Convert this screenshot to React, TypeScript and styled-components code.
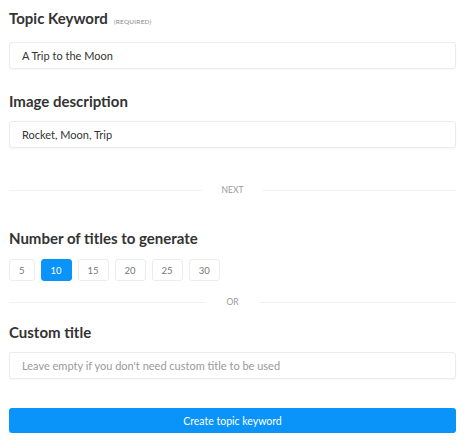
import { useState } from "react";
import styled, { createGlobalStyle } from "styled-components";

const GlobalStyle = createGlobalStyle`
  body {
    margin: 0;
    background: #ffffff;
    font-family: Lato, "Open Sans", sans-serif;
  }
`;

const Form = styled.div`
  display: flex;
  flex-direction: column;
  padding: 8px 10px 0 9px;
`;

const Label = styled.div<{ $top?: number }>`
  display: flex;
  align-items: baseline;
  gap: 6px;
  margin-top: ${(p) => p.$top ?? 0}px;
  font-size: 15px;
  line-height: 20px;
  font-weight: 700;
  color: #333333;
`;

const Required = styled.span`
  font-size: 6.5px;
  font-weight: 400;
  color: #8a8a8a;
  letter-spacing: 0.2px;
`;

const Input = styled.input`
  box-sizing: border-box;
  width: 100%;
  height: 27px;
  margin-top: 10px;
  padding: 0 12px;
  border: 1px solid #ececec;
  border-radius: 3px;
  box-shadow: 0 1px 2px rgba(0, 0, 0, 0.04);
  font-family: Lato, sans-serif;
  font-size: 11px;
  color: #333333;
  outline: none;

  &::placeholder {
    color: #9a9a9a;
  }
`;

const Divider = styled.div<{ $top: number }>`
  display: flex;
  align-items: center;
  gap: 20px;
  margin-top: ${(p) => p.$top}px;
  height: 12px;
  font-size: 8.5px;
  color: #999999;

  &::before,
  &::after {
    content: "";
    flex: 1;
    height: 1px;
    background: #f0f0f0;
  }
`;

const Counts = styled.div`
  display: flex;
  gap: 6px;
  margin-top: 11px;
`;

const CountButton = styled.button<{ $active: boolean }>`
  box-sizing: border-box;
  height: 22px;
  min-width: 25px;
  padding: 0 9px;
  border: 1px solid ${(p) => (p.$active ? "#0a93f8" : "#ececec")};
  border-radius: 3px;
  background: ${(p) => (p.$active ? "#0a93f8" : "#ffffff")};
  color: ${(p) => (p.$active ? "#ffffff" : "#777777")};
  font-family: Lato, sans-serif;
  font-size: 9.5px;
  cursor: pointer;
`;

const Submit = styled.button`
  box-sizing: border-box;
  width: 100%;
  height: 25px;
  margin-top: 29px;
  border: none;
  border-radius: 3px;
  background: #0a93f8;
  color: #ffffff;
  font-family: Lato, sans-serif;
  font-size: 10.5px;
  cursor: pointer;
`;

const counts = [5, 10, 15, 20, 25, 30];

export default function App() {
  const [count, setCount] = useState(10);

  return (
    <>
      <GlobalStyle />
      <Form>
        <Label>
          Topic Keyword <Required>(REQUIRED)</Required>
        </Label>
        <Input defaultValue="A Trip to the Moon" />

        <Label $top={22}>Image description</Label>
        <Input defaultValue="Rocket, Moon, Trip" />

        <Divider $top={36}>NEXT</Divider>

        <Label $top={32}>Number of titles to generate</Label>
        <Counts>
          {counts.map((n) => (
            <CountButton key={n} $active={n === count} onClick={() => setCount(n)}>
              {n}
            </CountButton>
          ))}
        </Counts>

        <Divider $top={15}>OR</Divider>

        <Label $top={14}>Custom title</Label>
        <Input placeholder="Leave empty if you don't need custom title to be used" />

        <Submit>Create topic keyword</Submit>
      </Form>
    </>
  );
}
